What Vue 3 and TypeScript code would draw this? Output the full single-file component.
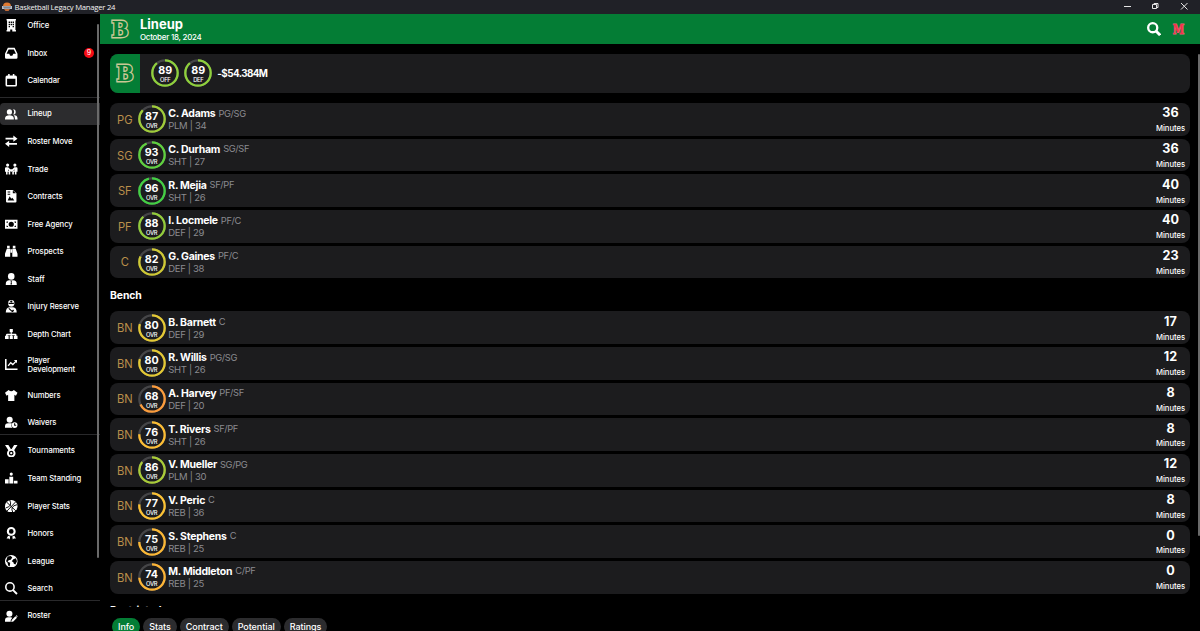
<script setup lang="ts">
interface NavItem { label: string; icon: string; badge?: number; active?: boolean; tall?: boolean }
interface Player { slot: string; rating: number; name: string; pos: string; info: string; minutes: number; color: string }

// Icon markup on a 24 x 24 grid, painted with currentColor.
const icons: Record<string, string> = {
  office: '<path fill-rule="evenodd" d="M3 0h18v3h-1v18h1v3h-7v-4h-4v4H3v-3h1V3H3zM7 5v2.600h2.600V5zm3.800 0v2.600h2.600V5zm3.800 0v2.600h2.600V5zM7 9.200v2.600h2.600V9.200zm3.800 0v2.600h2.600V9.200zm3.800 0v2.600h2.600V9.200zM7 13.400V16h2.600v-2.600zm7.600 0V16h2.600v-2.600z"/>',
  inbox: '<path fill-rule="evenodd" d="M5.500 1.500h13L24 13v7q0 2.500-2.500 2.500h-19Q0 22.500 0 20v-7zM7 5l-4 8h5l2 4h4l2-4h5l-4-8z"/>',
  calendar: '<path fill-rule="evenodd" d="M6 0h3v3h6V0h3v3h2q3 0 3 3v15q0 3-3 3H4q-3 0-3-3V6q0-3 3-3h2zM4 9v12h16V9z"/>',
  lineup: '<circle cx="8.500" cy="7.500" r="5"/><path d="M0 22v-1.500c0-8.500 17-8.500 17 0V22zM15.500 2.500a5 5 0 1 1 0 10 8 8 0 0 0 0-10M19 22v-2q0-4-2.500-6C21 13 24 15.500 24 20v2z"/>',
  move: '<path d="M1 5.500h15V1l8 6-8 6V8.500H1zM23 15.500H8V11l-8 6 8 6v-4.500h15z"/>',
  trade: '<circle cx="5" cy="4" r="3"/><circle cx="19" cy="4" r="3"/><path fill-rule="evenodd" d="M0 10q0-2 2-2h4l4 4h4l4-4h4q2 0 2 2v7h-2v5h-3v-5h-2v5h-3v-7l-1 2h-2l-1-2v7H7v-5H5v5H2v-5H0zM6 12v3l2 0zm12 0-2 3h2z"/>',
  contract: '<path fill-rule="evenodd" d="M2 0h13l7 6v16q0 2-2 2H4q-2 0-2-2zM5 3v2h5V3zm0 4v2h5V7zm0 13 4-8 3 5 2-2 4 5zM15 1v5h6z"/>',
  money: '<path fill-rule="evenodd" d="M0 3.500h24v17H0zM12 7a5 5 0 1 0 0 10 5 5 0 0 0 0-10M3 6.500v3q3 0 3-3zm18 0h-3q0 3 3 3zM3 17.500h3q0-3-3-3zm18 0v-3q-3 0-3 3z"/>',
  scout: '<path d="M4 1.500h5V6H4zm11 0h5V6h-5zM3.500 7H10v15.500H0V17zM14 7h6.500L24 17v5.500H14zM10.500 8h3v7h-3z"/>',
  staff: '<circle cx="12" cy="6.500" r="6.300"/><path fill-rule="evenodd" d="M1.500 24v-3q0-7 7-7h7q7 0 7 7v3zM10 15l1.500 2-1 5h3l-1-5L14 15z"/>',
  injury: '<path fill-rule="evenodd" d="M6 6q0-6 6-6t6 6v2q-1 5-6 5T6 8zm1-.500v2h10v-2zM11 1v1h-1v2h1v1h2V4h1V2h-1V1z"/><path fill-rule="evenodd" d="M1.500 24q0-9 7-10h7q7 1 7 10zm5-7 7 6h3L8 15.500zm9 1-2 2 2 2 2-2z"/>',
  tree: '<path d="M9 2h6v6h-2v3h7q2 0 2 2v2h2v6h-7v-6h2v-1h-6v1h2v6H9v-6h2v-1H5v1h2v6H0v-6h2v-2q0-2 2-2h7V8H9z"/>',
  chart: '<path d="M1.500 2v19.500H24" fill="none" stroke="currentColor" stroke-width="3"/><path d="m6 15 5-6 4 3.500 7-7" fill="none" stroke="currentColor" stroke-width="2.600"/><path d="M17 4h6v6z"/>',
  shirt: '<path d="M7 2q5 5 10 0l7 5-3 6-3-2v12H6V11l-3 2-3-6z"/>',
  waiver: '<circle cx="9" cy="7" r="5.800"/><path d="M0 22.500V20q0-6 6-6h6q1 0 1 .500a8 8 0 0 0 1 8z"/><path fill-rule="evenodd" d="M18.500 12a5.500 5.500 0 1 1 0 11 5.500 5.500 0 0 1 0-11m-1 2v4.500h4V17h-2v-3z"/>',
  medal: '<path d="M0 0h6.500l5 8-5 2zM24 0h-6.500l-5 8 5 2z"/><path fill-rule="evenodd" d="M12 7.500a8.200 8.200 0 1 1 0 16.400 8.200 8.200 0 0 1 0-16.400m0 3.700a4.500 4.500 0 1 0 0 9 4.500 4.500 0 0 0 0-9"/><circle cx="12" cy="15.700" r="2.200"/>',
  podium: '<circle cx="12" cy="4" r="3"/><path d="M8.300 9h7.400v13H8.300zM0 14h7v8H0zM17 17h7v5h-7z"/>',
  ball: '<circle cx="12" cy="12" r="12"/><path d="M3 4 21 21M21 3 4 21M9 0q6 12-7 15M15 24q-6-12 8-15" fill="none" stroke="#000" stroke-width="1.800"/>',
  award: '<path fill-rule="evenodd" d="M12 0a8.500 8.500 0 1 1 0 17 8.500 8.500 0 0 1 0-17m0 4a4.500 4.500 0 1 0 0 9 4.500 4.500 0 0 0 0-9"/><path d="m6 17 4 1-1 6-2-2H3zM18 17l-4 1 1 6 2-2h4z"/>',
  globe: '<circle cx="12" cy="12" r="12"/><path d="M5 3l6-1 3 3-3 4-4 1-2 3 5 2-1 7-3-2-1-5-3-3zM16 8l5-2 2 6-3 6-3-1-1-3-3-2z" fill="#000"/>',
  search: '<circle cx="9.500" cy="9.500" r="8" fill="none" stroke="currentColor" stroke-width="3"/><path d="m15 15 8 8" stroke="currentColor" stroke-width="3.600"/>',
  find: '<circle cx="9.800" cy="9.800" r="7.800" fill="none" stroke="currentColor" stroke-width="4"/><path d="m15 15 7.500 7.500" stroke="currentColor" stroke-width="5"/>',
  roster: '<circle cx="8.500" cy="7" r="5.800"/><path d="M0 22.500V20q0-6 6-6h5l3 1-3 4v3.500zM13 19l7-7 3 3-7 7-4 1zM21 11l1-1q2 0 2 3l-1 1z"/>',
}

const groups: NavItem[][] = [
  [
    { label: 'Office', icon: 'office' },
    { label: 'Inbox', icon: 'inbox', badge: 9 },
    { label: 'Calendar', icon: 'calendar' },
  ],
  [
    { label: 'Lineup', icon: 'lineup', active: true },
    { label: 'Roster Move', icon: 'move' },
    { label: 'Trade', icon: 'trade' },
    { label: 'Contracts', icon: 'contract' },
    { label: 'Free Agency', icon: 'money' },
    { label: 'Prospects', icon: 'scout' },
    { label: 'Staff', icon: 'staff' },
    { label: 'Injury Reserve', icon: 'injury' },
    { label: 'Depth Chart', icon: 'tree' },
    { label: 'Player Development', icon: 'chart', tall: true },
    { label: 'Numbers', icon: 'shirt' },
    { label: 'Waivers', icon: 'waiver' },
  ],
  [
    { label: 'Tournaments', icon: 'medal' },
    { label: 'Team Standing', icon: 'podium' },
    { label: 'Player Stats', icon: 'ball' },
    { label: 'Honors', icon: 'award' },
    { label: 'League', icon: 'globe' },
    { label: 'Search', icon: 'search' },
  ],
  [{ label: 'Roster', icon: 'roster' }],
]

const starters: Player[] = [
  { slot: 'PG', rating: 87, name: 'C. Adams', pos: 'PG/SG', info: 'PLM | 34', minutes: 36, color: '#a0cc3a' },
  { slot: 'SG', rating: 93, name: 'C. Durham', pos: 'SG/SF', info: 'SHT | 27', minutes: 36, color: '#5fd03f' },
  { slot: 'SF', rating: 96, name: 'R. Mejia', pos: 'SF/PF', info: 'SHT | 26', minutes: 40, color: '#43d044' },
  { slot: 'PF', rating: 88, name: 'I. Locmele', pos: 'PF/C', info: 'DEF | 29', minutes: 40, color: '#92cc3b' },
  { slot: 'C', rating: 82, name: 'G. Gaines', pos: 'PF/C', info: 'DEF | 38', minutes: 23, color: '#cfc934' },
]
const bench: Player[] = [
  { slot: 'BN', rating: 80, name: 'B. Barnett', pos: 'C', info: 'DEF | 29', minutes: 17, color: '#e4c934' },
  { slot: 'BN', rating: 80, name: 'R. Willis', pos: 'PG/SG', info: 'SHT | 26', minutes: 12, color: '#e4c934' },
  { slot: 'BN', rating: 68, name: 'A. Harvey', pos: 'PF/SF', info: 'DEF | 20', minutes: 8, color: '#fb9c3c' },
  { slot: 'BN', rating: 76, name: 'T. Rivers', pos: 'SF/PF', info: 'SHT | 26', minutes: 8, color: '#fcbd34' },
  { slot: 'BN', rating: 86, name: 'V. Mueller', pos: 'SG/PG', info: 'PLM | 30', minutes: 12, color: '#a9cc38' },
  { slot: 'BN', rating: 77, name: 'V. Peric', pos: 'C', info: 'REB | 36', minutes: 8, color: '#fcc234' },
  { slot: 'BN', rating: 75, name: 'S. Stephens', pos: 'C', info: 'REB | 25', minutes: 0, color: '#fcb835' },
  { slot: 'BN', rating: 74, name: 'M. Middleton', pos: 'C/PF', info: 'REB | 25', minutes: 0, color: '#fcb436' },
]
const sections = [
  { title: '', players: starters },
  { title: 'Bench', players: bench },
]
const teamRatings = [{ value: 89, label: 'OFF' }, { value: 89, label: 'DEF' }]
const tabs = ['Info', 'Stats', 'Contract', 'Potential', 'Ratings']
</script>

<template>
  <div class="window">
    <header class="titlebar">
      <svg class="appicon" viewBox="0 0 20 20"><path d="M2 9a8 8 0 0 1 16 0z" fill="#e07a32" /><path d="M0 8h20v6H0z" fill="#b9bec8" /><path d="M2 10h16M4 12h12" stroke="#39414f" /><path d="M4 14h12l-3 4H7z" fill="#c56b36" /></svg>
      <span class="apptitle">Basketball Legacy Manager 24</span>
      <svg class="winctl" viewBox="0 0 70 14" fill="none" stroke="#e4e4e4" stroke-width="1">
        <path d="M0 6.500h7M28.500 4.500h4v4h-4zM30 4.500v-1h4v4h-1.500M57 3l6.500 6.500M63.500 3 57 9.500" />
      </svg>
    </header>
    <div class="body">
      <aside class="sidebar">
        <nav v-for="(group, g) in groups" :key="g" class="group" :class="'group-' + g">
          <div v-for="item in group" :key="item.label" class="nav" :class="{ active: item.active, tall: item.tall }">
            <svg class="navicon" viewBox="0 0 24 24" fill="currentColor" v-html="icons[item.icon]"></svg>
            <span class="navlabel">{{ item.label }}</span>
            <span v-if="item.badge" class="badge">{{ item.badge }}</span>
          </div>
        </nav>
        <i class="sidescroll"></i>
      </aside>
      <main class="main">
        <div class="header">
          <svg class="logo" viewBox="0 0 22 22"><text class="mark" x="11" y="18.700" textLength="17" lengthAdjust="spacingAndGlyphs">B</text></svg>
          <div class="heading">
            <h1>Lineup</h1>
            <p>October 18, 2024</p>
          </div>
          <svg class="find" viewBox="0 0 24 24" v-html="icons.find"></svg>
          <svg class="rival" viewBox="0 0 13 13"><text class="rivalmark" x="6.500" y="11" textLength="11.500" lengthAdjust="spacingAndGlyphs">M</text></svg>
        </div>
        <div class="content">
          <section class="team">
            <div class="teamlogo">
              <svg class="logo" viewBox="0 0 22 22"><text class="mark" x="11" y="18.700" textLength="17" lengthAdjust="spacingAndGlyphs">B</text></svg>
            </div>
            <div v-for="r in teamRatings" :key="r.label" class="ring">
              <svg viewBox="0 0 28 28"><circle class="track" cx="14" cy="14" r="12.700" /><circle class="arc" cx="14" cy="14" r="12.700" pathLength="100" stroke="#8fd03c" :stroke-dasharray="r.value + ' 100'" /></svg>
              <b>{{ r.value }}</b><small>{{ r.label }}</small>
            </div>
            <strong class="cap">-$54.384M</strong>
          </section>
          <section v-for="s in sections" :key="s.title" class="section">
            <h2 v-if="s.title">{{ s.title }}</h2>
            <div v-for="p in s.players" :key="p.name" class="player">
              <span class="slot">{{ p.slot }}</span>
              <div class="ring">
                <svg viewBox="0 0 28 28"><circle class="track" cx="14" cy="14" r="12.700" /><circle class="arc" cx="14" cy="14" r="12.700" pathLength="100" :stroke="p.color" :stroke-dasharray="p.rating + ' 100'" /></svg>
                <b>{{ p.rating }}</b><small>OVR</small>
              </div>
              <div class="who">
                <div class="line"><strong>{{ p.name }}</strong><span>{{ p.pos }}</span></div>
                <div class="info">{{ p.info }}</div>
              </div>
              <div class="mins"><b>{{ p.minutes }}</b><small>Minutes</small></div>
            </div>
          </section>
          <h2 class="next">Restricted</h2>
          <i class="mainscroll"></i>
        </div>
        <footer class="tabs">
          <span v-for="(t, i) in tabs" :key="t" class="tab" :class="{ on: i === 0 }">{{ t }}</span>
        </footer>
      </main>
    </div>
  </div>
</template>

<style>
html, body { background: #000; overflow: hidden; }
</style>

<style scoped>
.window { width: 1200px; height: 631px; overflow: hidden; background: #000; color: #fff; font-family: Inter, "Liberation Sans", sans-serif; display: flex; flex-direction: column; }
h1, h2, p { margin: 0; }
.titlebar { flex: none; height: 14px; background: #202127; display: flex; align-items: center; }
.appicon { width: 10px; height: 10px; margin-left: 1.500px; }
.apptitle { margin-left: 3px; padding-top: 1px; font: 7.700px/13px "Open Sans", sans-serif; letter-spacing: -0.250px; color: #f2f2f2; }
.winctl { width: 70px; height: 14px; margin-left: auto; margin-right: 6px; }
.body { flex: none; height: 617px; display: flex; }
.sidebar { position: relative; width: 100px; flex: none; box-sizing: border-box; overflow: hidden; }
.group { display: flex; flex-direction: column; }
.group-0 { margin-top: -2.100px; height: 85.600px; border-bottom: 1px solid #29292b; box-sizing: border-box; }
.group-1 { margin-top: 2.700px; height: 334.300px; border-bottom: 1px solid #29292b; }
.group-2 { margin-top: 1.700px; height: 162.800px; border-bottom: 1px solid #29292b; }
.group-3 { margin-top: 1.200px; }
.nav { flex: none; height: 21.540px; margin: 3px 0; display: flex; align-items: center; padding-left: 5px; box-sizing: border-box; }
.nav.tall { height: 27.400px; }
.nav.active { background: #2c2c2e; border-radius: 4px 0 0 4px; }
.navicon { width: 12.500px; height: 12.500px; flex: none; }
.navlabel { margin-left: 10px; width: 60px; font-size: 7.700px; line-height: 9px; font-weight: 500; letter-spacing: -0.100px; white-space: nowrap; }
.tall .navlabel { width: 50px; white-space: normal; }
.badge { flex: none; width: 10px; height: 10px; border-radius: 50%; background: #f60c14; font-size: 7px; line-height: 10px; text-align: center; margin-left: -3.600px; }
.sidescroll { position: absolute; right: 1px; top: 10px; width: 2px; height: 534px; background: #6a6a6a; border-radius: 1px; }
.main { width: 1100px; display: flex; flex-direction: column; }
.header { flex: none; height: 30px; background: #047d35; display: flex; align-items: center; padding: 0 15px 0 9px; }
.logo { width: 22px; height: 22px; flex: none; overflow: visible; }
.mark { font: bold 21.500px "DejaVu Serif", serif; text-anchor: middle; fill: #047d35; stroke: #c9c795; stroke-width: 2.800; paint-order: stroke; stroke-linejoin: miter; }
.heading { margin-left: 9px; flex: 1; }
h1 { font-size: 13px; line-height: 14px; font-weight: 700; }
.heading p { font-size: 7.900px; line-height: 10px; margin-top: 1px; font-weight: 500; letter-spacing: -0.220px; }
.find { width: 14px; height: 14px; margin-right: 11.500px; }
.rival { width: 13px; height: 13px; overflow: visible; }
.rivalmark { font: bold 13px "DejaVu Serif", serif; text-anchor: middle; fill: #f5324b; stroke: #e0697c; stroke-width: 1; paint-order: stroke; }
.content { position: relative; flex: none; height: 563px; overflow: hidden; padding: 10px 10px 0; box-sizing: border-box; }
.team { height: 38.500px; background: #1c1c1e; border-radius: 8px; overflow: hidden; display: flex; align-items: center; margin-bottom: 10.500px; }
.teamlogo { width: 30px; height: 100%; background: #047d35; display: flex; align-items: center; justify-content: center; margin-right: 11.300px; }
.ring { position: relative; width: 28px; height: 28px; flex: none; display: flex; flex-direction: column; align-items: center; }
.ring svg { position: absolute; inset: 0; width: 28px; height: 28px; transform: rotate(-90deg); }
.ring circle { fill: none; stroke-width: 2.300; }
.track { stroke: #454547; }
.ring b { position: relative; font-size: 10.700px; line-height: 12px; margin-top: 6px; font-weight: 700; }
.ring small { position: relative; font-size: 5.800px; line-height: 6px; font-weight: 500; letter-spacing: -0.300px; }
.team .ring { margin-right: 5px; }
.cap { font-size: 9.800px; font-weight: 700; letter-spacing: -0.550px; }
.section h2, .next { font-size: 10.400px; line-height: 12px; font-weight: 700; letter-spacing: -0.080px; }
.section h2 { padding: 8.500px 0 9.500px; }
.player { height: 32.700px; margin-bottom: 2.970px; background: #1c1c1e; border-radius: 8px; display: flex; align-items: center; box-sizing: border-box; padding-right: 5px; }
.slot { width: 27.600px; padding: 1px 0 0 2px; box-sizing: border-box; text-align: center; font-size: 11.200px; color: #b98f4b; }
.who { margin-left: 2.700px; flex: 1; padding-top: 1px; }
.line { display: flex; align-items: center; gap: 3px; height: 12px; }
.line strong { font-size: 10.500px; line-height: 12px; font-weight: 700; letter-spacing: -0.260px; }
.line span { font-size: 9.300px; line-height: 10px; color: #8b8b90; margin-top: -1.500px; letter-spacing: -0.350px; }
.info { font-size: 9.500px; line-height: 11px; color: #8b8b90; letter-spacing: -0.320px; }
.mins { width: 29px; display: flex; flex-direction: column; align-items: center; padding-top: 1px; }
.mins b { font-size: 12.600px; line-height: 15px; font-weight: 700; }
.mins small { font-size: 7.700px; line-height: 10px; margin-top: 3.800px; font-weight: 500; letter-spacing: -0.050px; }
.next { margin-top: 11.300px; }
.mainscroll { position: absolute; right: 0; top: 10px; width: 2px; height: 482px; background: #6a6a6a; border-radius: 1px; }
.tabs { margin-top: 10.500px; padding-left: 12px; display: flex; gap: 3px; height: 17px; }
.tab { background: #2c2c2e; border-radius: 9px; font-size: 9px; line-height: 17px; font-weight: 500; letter-spacing: -0.060px; padding: 0 6px; white-space: nowrap; }
.tab.on { background: #047d35; }
</style>
